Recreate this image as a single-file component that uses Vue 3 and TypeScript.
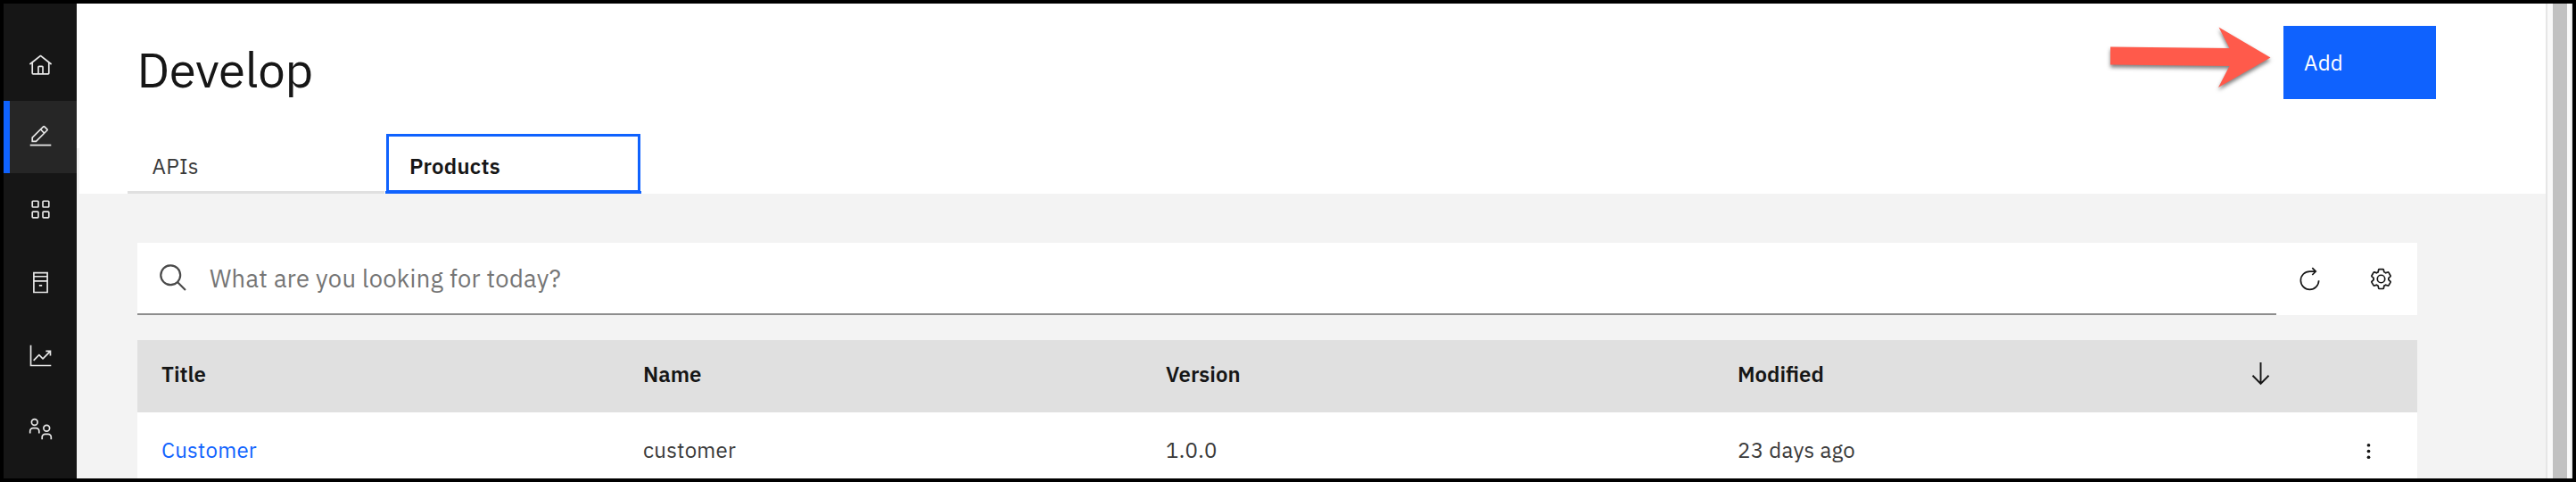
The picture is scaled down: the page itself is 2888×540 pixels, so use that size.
<script setup lang="ts">
interface Product {
  title: string
  name: string
  version: string
  modified: string
}

const navItems = ['home', 'develop', 'manage', 'catalogs', 'analytics', 'members'] as const
const active = 'develop'
const products: Product[] = [
  { title: 'Customer', name: 'customer', version: '1.0.0', modified: '23 days ago' },
]
</script>

<template>
  <div class="window">
    <nav class="sidebar">
      <a v-for="item in navItems" :key="item" class="nav-item" :class="{ active: item === active }">
        <svg class="nav-icon" viewBox="0 0 32 32">
          <path
            v-if="item === 'home'"
            d="M16.6123 2.2138a1.01 1.01 0 0 0-1.2427 0L1 13.4194l1.2427 1.5717L4 13.6209V26a2.0041 2.0041 0 0 0 2 2h20a2.0037 2.0037 0 0 0 2-2V13.63L29.7573 15 31 13.4282ZM18 26h-4v-8h4Zm2 0v-8a2.0023 2.0023 0 0 0-2-2h-4a2.002 2.002 0 0 0-2 2v8H6V12.0615l10-7.79 10 7.8005V26Z"
          />
          <path
            v-else-if="item === 'develop'"
            d="M2 27h28v2H2zM25.4 9c.8-.8.8-2 0-2.8l-3.6-3.6c-.8-.8-2-.8-2.8 0l-15 15V24h6.4l15-15zm-5-5L24 7.6l-3 3L17.4 7l3-3zM6 22v-3.600l10-10 3.600 3.600-10 10H6z"
          />
          <path
            v-else-if="item === 'manage'"
            d="M12 4H6a2 2 0 0 0-2 2v6a2 2 0 0 0 2 2h6a2 2 0 0 0 2-2V6a2 2 0 0 0-2-2Zm0 8H6V6h6ZM26 4h-6a2 2 0 0 0-2 2v6a2 2 0 0 0 2 2h6a2 2 0 0 0 2-2V6a2 2 0 0 0-2-2Zm0 8h-6V6h6ZM12 18H6a2 2 0 0 0-2 2v6a2 2 0 0 0 2 2h6a2 2 0 0 0 2-2v-6a2 2 0 0 0-2-2Zm0 8H6v-6h6ZM26 18h-6a2 2 0 0 0-2 2v6a2 2 0 0 0 2 2h6a2 2 0 0 0 2-2v-6a2 2 0 0 0-2-2Zm0 8h-6v-6h6Z"
          />
          <path
            v-else-if="item === 'catalogs'"
            fill-rule="evenodd"
            d="M6 2h20v28H6ZM8 4v3h16V4ZM8 9v4h16V9ZM8 15v13h16V15ZM14 19h4v2h-4Z"
          />
          <path
            v-else-if="item === 'analytics'"
            d="M2 2h2v26h26v2H2ZM30 9h-7v2h3.590L19 18.590l-4.290-4.300a1 1 0 0 0-1.420 0L6 21.590 7.410 23 14 16.410l4.290 4.300a1 1 0 0 0 1.420 0L28 12.410V16h2Z"
          />
          <path
            v-else
            fill-rule="evenodd"
            d="M8 2a5 5 0 1 1 0 10A5 5 0 0 1 8 2Zm0 2a3 3 0 1 0 0 6A3 3 0 0 0 8 4ZM6 14h4a5 5 0 0 1 5 5v3h-2v-3a3 3 0 0 0-3-3H6a3 3 0 0 0-3 3v3H1v-3a5 5 0 0 1 5-5ZM24 10a5 5 0 1 1 0 10 5 5 0 0 1 0-10Zm0 2a3 3 0 1 0 0 6 3 3 0 0 0 0-6ZM22 22h4a5 5 0 0 1 5 5v3h-2v-3a3 3 0 0 0-3-3h-4a3 3 0 0 0-3 3v3h-2v-3a5 5 0 0 1 5-5Z"
          />
        </svg>
      </a>
    </nav>

    <main class="main">
      <header class="page-header">
        <div class="heading">
          <h1>Develop</h1>
          <button class="add">Add</button>
        </div>
        <div class="tabs">
          <div class="tab">APIs</div>
          <div class="tab selected">Products</div>
        </div>
        <svg class="pointer" viewBox="0 0 200 90">
          <path d="M6 32.500 139.500 34 127.500 10.500 185.500 44.500 127 78 139.500 54 6 52.500Z" />
        </svg>
      </header>

      <section class="content">
        <div class="toolbar">
          <div class="search">
            <svg class="search-icon" viewBox="0 0 32 32">
              <path
                d="m29 27.586-7.552-7.552a11.018 11.018 0 1 0-1.414 1.414L27.586 29ZM4 13a9 9 0 1 1 9 9 9.010 9.010 0 0 1-9-9Z"
              />
            </svg>
            <span>What are you looking for today?</span>
          </div>
          <button class="tool refresh">
            <svg viewBox="0 0 32 32">
              <path d="M28 18A12 12 0 1 1 16 6h8M19.300 1.300 24 6l-4.700 4.700" />
            </svg>
          </button>
          <button class="tool">
            <svg viewBox="0 0 32 32">
              <path
                d="M27 16.760V16v-.770l1.920-1.680A2 2 0 0 0 29.300 11l-2.360-4a2 2 0 0 0-1.730-1 2 2 0 0 0-.640.100l-2.430.820a11.350 11.350 0 0 0-1.310-.750l-.510-2.520a2 2 0 0 0-2-1.610h-4.680a2 2 0 0 0-2 1.610l-.510 2.520a11.480 11.480 0 0 0-1.320.750l-2.380-.860A2 2 0 0 0 6.790 6a2 2 0 0 0-1.730 1L2.700 11a2 2 0 0 0 .410 2.510L5 15.240v1.530l-1.890 1.680A2 2 0 0 0 2.700 21l2.360 4a2 2 0 0 0 1.730 1 2 2 0 0 0 .640-.100l2.430-.820a11.350 11.350 0 0 0 1.310.750l.510 2.520a2 2 0 0 0 2 1.610h4.720a2 2 0 0 0 2-1.610l.510-2.520a11.480 11.480 0 0 0 1.320-.750l2.420.820a2 2 0 0 0 .640.100 2 2 0 0 0 1.730-1l2.280-4a2 2 0 0 0-.410-2.510ZM25.210 24l-3.430-1.160a8.860 8.860 0 0 1-2.710 1.570L18.360 28h-4.720l-.710-3.550a9.360 9.360 0 0 1-2.700-1.570L6.790 24l-2.360-4 2.720-2.400a8.900 8.900 0 0 1 0-3.130L4.430 12l2.360-4 3.430 1.160a8.860 8.860 0 0 1 2.710-1.570L13.640 4h4.720l.710 3.550a9.360 9.360 0 0 1 2.700 1.570L25.210 8l2.360 4-2.720 2.400a8.900 8.900 0 0 1 0 3.130L27.570 20Z"
              />
              <path
                d="M16 22a6 6 0 1 1 6-6 5.940 5.940 0 0 1-6 6Zm0-10a3.910 3.910 0 0 0-4 4 3.910 3.910 0 0 0 4 4 3.910 3.910 0 0 0 4-4 3.910 3.910 0 0 0-4-4Z"
              />
            </svg>
          </button>
        </div>

        <div class="table">
          <div class="row head">
            <span>Title</span>
            <span>Name</span>
            <span>Version</span>
            <span>Modified</span>
            <span class="sort">
              <svg viewBox="0 0 32 32">
                <path d="M24.590 16.590 17 24.170V2h-2v22.170l-7.590-7.580L6 18l10 10 10-10Z" />
              </svg>
            </span>
          </div>
          <div v-for="p in products" :key="p.name" class="row">
            <a class="link">{{ p.title }}</a>
            <span>{{ p.name }}</span>
            <span>{{ p.version }}</span>
            <span>{{ p.modified }}</span>
            <span class="menu">
              <svg viewBox="0 0 32 32">
                <circle cx="16" cy="8" r="2.200" />
                <circle cx="16" cy="16" r="2.200" />
                <circle cx="16" cy="24" r="2.200" />
              </svg>
            </span>
          </div>
        </div>
      </section>
    </main>

    <div class="scrollbar"><div class="thumb"></div></div>
  </div>
</template>

<style>
body {
  margin: 0;
  overflow: hidden;
}
</style>

<style scoped>
* {
  box-sizing: border-box;
}
.window {
  display: flex;
  width: 2888px;
  height: 540px;
  overflow: hidden;
  border: 4px solid #000;
  background: #f3f3f3;
  color: #161616;
  font-family: 'IBM Plex Sans', Roboto, 'Liberation Sans', sans-serif;
  font-size: 24px;
  letter-spacing: 0.27px;
}
.sidebar {
  flex: none;
  width: 82px;
  padding-top: 27px;
  background: #161616;
}
.nav-item {
  display: flex;
  align-items: center;
  justify-content: center;
  height: 82px;
  padding: 0 0 1px 1px;
}
.nav-item:first-child {
  padding: 2px 0 0 1px;
}
.nav-item.active {
  height: 81px;
  padding: 0 6px 2px 0;
  border-left: 7px solid #0f62fe;
  background: #262626;
}
.nav-icon {
  width: 27px;
  height: 27px;
  fill: #e8e8e8;
}
.main {
  flex: none;
  width: 2768px;
}
.page-header {
  position: relative;
  height: 213px;
  background: #fff;
}
.heading {
  display: flex;
  justify-content: space-between;
  height: 146px;
  padding: 25px 123px 0 67.500px;
}
h1 {
  margin: 12.500px 0 0;
  font-size: 54.600px;
  font-weight: 400;
  line-height: 72px;
  height: 72px;
  letter-spacing: -0.350px;
}
button {
  border: 0;
  font: inherit;
  letter-spacing: inherit;
}
.add {
  width: 171px;
  height: 82px;
  padding: 0 0 1px 23px;
  background: #0f62fe;
  color: #fff;
  text-align: left;
}
.tabs {
  display: flex;
  gap: 1px;
  height: 67px;
  padding-left: 57px;
}
.tabs::before {
  content: '';
  width: 3px;
  height: 51px;
  margin: 16px 53px 0 -57px;
  background: #f3f3f3;
}
.tab {
  width: 288px;
  height: 67px;
  padding-left: 27.500px;
  border-bottom: 3px solid #e0e0e0;
  color: #393939;
  line-height: 72px;
}
.tab.selected {
  position: relative;
  width: 287px;
  padding-left: 27px;
  border-bottom-color: #0f62fe;
  color: #161616;
  font-weight: 600;
}
.tab.selected::before {
  content: '';
  position: absolute;
  inset: 0 1px -2px;
  border: 3px solid #0f62fe;
}
.pointer {
  position: absolute;
  left: 2274px;
  top: 16px;
  width: 200px;
  height: 90px;
  fill: #ff5a4b;
  filter: drop-shadow(0 3px 2px rgba(0, 0, 0, 0.500));
}
.content {
  width: 2624px;
  padding: 55px 0 0 68px;
}
.toolbar {
  display: flex;
  width: 2556px;
  height: 81px;
  background: #fff;
}
.search {
  display: flex;
  align-items: center;
  width: 2398px;
  padding-left: 23px;
  border-bottom: 2px solid #8d8d8d;
  color: #757575;
  font-size: 27.300px;
  letter-spacing: 0.300px;
}
.search-icon {
  width: 35px;
  height: 35px;
  margin-right: 23px;
  fill: #4a4a4a;
}
.tool {
  display: flex;
  align-items: center;
  justify-content: center;
  width: 79px;
  height: 81px;
  padding: 0 3px 0 0;
  background: none;
}
.tool svg {
  width: 27px;
  height: 27px;
  fill: #161616;
}
.tool.refresh {
  padding-right: 4px;
}
.tool.refresh svg {
  fill: none;
  stroke: #161616;
  stroke-width: 2;
}
.table {
  margin-top: 28px;
  width: 2556px;
}
.row {
  display: grid;
  grid-template-columns: 540px 586px 641px 571px 1fr;
  height: 81px;
  padding-left: 27px;
  background: #fff;
  color: #393939;
  line-height: 84px;
}
.row.head {
  background: #e0e0e0;
  color: #161616;
  font-weight: 600;
  letter-spacing: 0;
  line-height: 76px;
}
.link {
  color: #0f62fe;
}
.sort,
.menu {
  display: flex;
  fill: #161616;
}
.sort svg {
  width: 31px;
  height: 31px;
  margin-top: 23px;
}
.menu svg {
  width: 27px;
  height: 27px;
  margin: 29.500px 0 0 123px;
}
.scrollbar {
  flex: none;
  width: 30px;
  padding-left: 6px;
  border-left: 2px solid #e6e6e6;
  border-right: 2px solid #e8e8e8;
  background: #f9f9f9;
}
.thumb {
  width: 16px;
  height: 532px;
  background: #c1c1c1;
}
</style>
